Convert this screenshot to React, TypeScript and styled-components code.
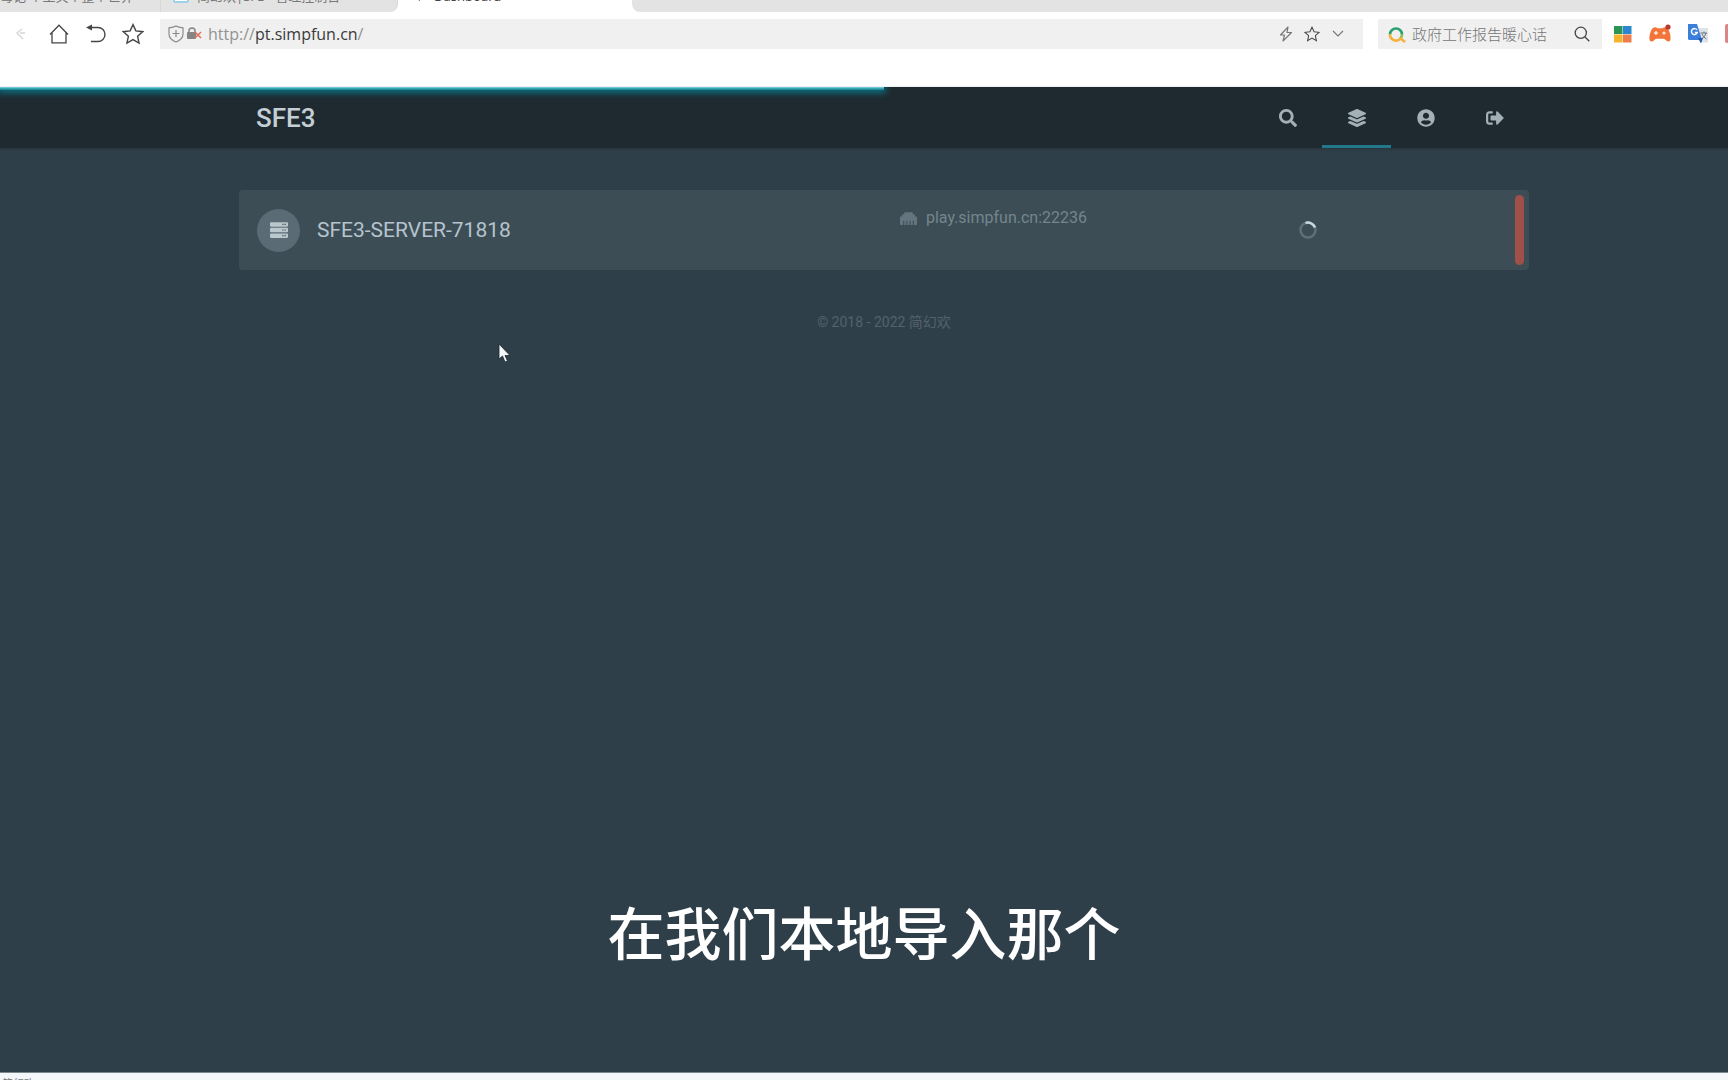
import React from "react";
import styled, { createGlobalStyle } from "styled-components";
import {
  FaSearch,
  FaLayerGroup,
  FaUserCircle,
  FaSignOutAlt,
  FaServer,
  FaEthernet,
} from "react-icons/fa";

const GlobalStyle = createGlobalStyle`
  * { box-sizing: border-box; }
  body {
    margin: 0;
    background: #f7f9fa;
    overflow: hidden;
    font-family: "Noto Sans", "Noto Sans CJK SC", sans-serif;
  }
  button, input { font: inherit; border: 0; padding: 0; margin: 0; background: none; color: inherit; outline: 0; }
`;

const Window = styled.div`
  display: flex;
  flex-direction: column;
  height: 100vh;
  overflow: hidden;
`;

/* Browser chrome */

const TabStrip = styled.div`
  display: flex;
  align-items: flex-end;
  height: 12px;
  overflow: hidden;
  background: #ffffff;
`;

const Tab = styled.button<{ $active?: boolean; $width: number; $round?: boolean }>`
  display: flex;
  align-items: center;
  gap: 8px;
  flex: none;
  width: ${(p) => p.$width}px;
  height: 26px;
  padding: 0 12px 6px;
  padding-left: ${(p) => (p.$round || p.$active ? 12 : 0)}px;
  border-right: 1px solid ${(p) => (p.$active ? "#ffffff" : "#d8d8d8")};
  border-radius: ${(p) => (p.$round ? "0 0 8px 0" : "0")};
  background: ${(p) => (p.$active ? "#ffffff" : "#e3e3e3")};
  color: ${(p) => (p.$active ? "#444444" : "#777777")};
  font-size: 13px;
  line-height: 20px;
  white-space: nowrap;
`;

const Favicon = styled.span<{ $color: string }>`
  width: 16px;
  height: 14px;
  border-radius: 2px;
  border: 2px solid ${(p) => p.$color};
  background: #ffffff;
`;

const TabArrow = styled.svg`
  width: 16px;
  height: 14px;
`;

const TabRest = styled.div`
  flex: 1;
  height: 26px;
  padding: 0 16px 6px;
  border-radius: 0 0 0 8px;
  background: #e3e3e3;
  color: #777777;
  line-height: 20px;
`;

const Toolbar = styled.div`
  display: flex;
  align-items: center;
  flex: none;
  height: 75px;
  padding: 0 0 31px 14px;
  background: #ffffff;
  overflow: hidden;
`;

const ToolButton = styled.button<{ $width?: number }>`
  display: flex;
  align-items: center;
  justify-content: center;
  flex: none;
  width: ${(p) => p.$width ?? 37}px;
  height: 28px;
  color: #454545;
`;

const BackIcon = styled.svg`
  width: 12px;
  height: 12px;
  margin-right: 12px;
`;

const AddressBar = styled.div`
  display: flex;
  align-items: center;
  flex: 1;
  height: 30px;
  margin-left: 9px;
  padding: 0 12px 0 8px;
  background: #f0f0f0;
  color: #8b8b8b;
`;

const LockIcon = styled.svg`
  width: 18px;
  height: 14px;
  margin-left: 2px;
`;

const Url = styled.label`
  display: flex;
  flex: 1;
  margin-left: 4px;
  color: #929292;
  font-family: "Open Sans", sans-serif;
  font-size: 16px;
  line-height: 22px;
`;

const UrlInput = styled.input`
  field-sizing: content;
  color: #3a3a3a;
`;

const SearchBox = styled.label`
  display: flex;
  align-items: center;
  gap: 6px;
  flex: none;
  width: 224px;
  height: 30px;
  margin-left: 15px;
  padding: 0 6px 0 10px;
  background: #f0f0f0;
  color: #606060;
`;

const SearchInput = styled.input`
  flex: 1;
  min-width: 0;
  font-family: "Noto Sans CJK SC", sans-serif;
  font-weight: 300;
  font-size: 15px;
  line-height: 22px;
  &::placeholder { color: #757575; opacity: 1; }
`;

const Extensions = styled.div`
  display: flex;
  align-items: center;
  flex: none;
  gap: 16px;
  width: 126px;
  padding-left: 12px;
  overflow: hidden;
`;

const ExtensionButton = styled.button`
  display: flex;
  flex: none;
`;

/* Dashboard page; it is wider than the window, so it runs past the right edge */

const Page = styled.main`
  position: relative;
  flex: 1;
  width: calc(100% + 40px);
  background: #2f3f49;
  font-family: Roboto, "Noto Sans CJK SC", sans-serif;
`;

const Progress = styled.div`
  position: absolute;
  top: 0;
  left: 0;
  width: 50%;
  height: 3px;
  background: linear-gradient(#8ad6de, #2a9cab 60%, #128090);
  box-shadow: 0 1px 6px 2px #0b7385;
  clip-path: inset(0 -12px -12px 0);
`;

const Header = styled.header`
  height: 61px;
  background: #1f2a30;
  box-shadow: 0 1px 2px #26333b;
`;

const Container = styled.div`
  display: flex;
  width: 1290px;
  max-width: 100%;
  height: 100%;
  margin: 0 auto;
`;

const Brand = styled.a`
  flex: 1;
  padding-left: 17px;
  color: #c3cfd4;
  font-size: 26px;
  font-weight: 500;
  line-height: 62px;
  text-decoration: none;
`;

const NavLink = styled.a<{ $active?: boolean }>`
  display: flex;
  align-items: center;
  justify-content: center;
  width: 69px;
  border-bottom: 3px solid ${(p) => (p.$active ? "#23778a" : "transparent")};
  border-top: 3px solid transparent;
  color: #a3b0b7;
  font-size: 18px;
`;

const Content = styled.section`
  width: 1290px;
  max-width: 100%;
  margin: 42px auto 0;
`;

const ServerRow = styled.a`
  position: relative;
  display: grid;
  grid-template-columns: repeat(12, 1fr);
  align-items: center;
  gap: 18px;
  height: 80px;
  padding: 0 18px;
  border-radius: 4px;
  background: #3d4d55;
  text-decoration: none;
`;

const ServerName = styled.div`
  grid-column: span 6;
  display: flex;
  align-items: center;
  gap: 17px;
  color: #b5c4ce;
  font-size: 21px;
`;

const ServerIcon = styled.span`
  display: flex;
  align-items: center;
  justify-content: center;
  width: 43px;
  height: 43px;
  border-radius: 50%;
  background: #5b6b76;
  color: #bac7cc;
  font-size: 18px;
`;

const Address = styled.div`
  grid-column: span 2;
  display: flex;
  align-items: center;
  justify-content: flex-end;
  align-self: start;
  gap: 9px;
  margin-top: 18px;
  color: #74858d;
  font-size: 16px;
  line-height: 20px;
  white-space: nowrap;
  svg { color: #64757f; font-size: 17px; }
`;

const Stats = styled.div`
  grid-column: span 4;
  display: flex;
  justify-content: center;
`;

const Spinner = styled.span`
  display: block;
  width: 18px;
  height: 18px;
`;

const StatusBar = styled.span`
  position: absolute;
  top: 5px;
  right: 5px;
  bottom: 5px;
  width: 9px;
  border-radius: 5px;
  background: #a05048;
`;

const Footer = styled.footer`
  padding-top: 42px;
  color: #52636c;
  font-size: 14px;
  line-height: 20px;
  text-align: center;
`;

const BottomStrip = styled.div`
  flex: none;
  height: 8px;
  overflow: hidden;
  padding: 4px 0 0 2px;
  background: #f5f8fa;
  border-top: 1px solid #7d888e;
  color: #777777;
  font-size: 11px;
  line-height: 14px;
`;

const Subtitle = styled.p`
  position: fixed;
  left: 0;
  right: 0;
  bottom: 110px;
  margin: 0;
  color: #ffffff;
  font-family: "Noto Sans CJK SC", sans-serif;
  font-size: 57px;
  font-weight: 500;
  line-height: 80px;
  text-align: center;
`;

const Pointer = styled.svg`
  position: fixed;
  left: 498px;
  top: 343px;
  width: 14px;
  height: 20px;
`;

const StarPath = "M10 1.5l2.6 5.7 6.2.7-4.6 4.2 1.3 6.2L10 15.1l-5.5 3.2 1.3-6.2L1.2 7.9l6.2-.7z";

const Star = ({ size }: { size: number }) => (
  <svg width={size} height={size} viewBox="0 0 20 20" fill="none" stroke="currentColor" strokeWidth="1.3">
    <path d={StarPath} />
  </svg>
);

const Chrome = () => (
  <>
    <TabStrip>
      <Tab $width={161}>每记 个主关个整个世界</Tab>
      <Tab $width={237} $round>
        <Favicon $color="#9fd0ea" />
        简幻欢|SFE - 管理控制台
      </Tab>
      <Tab $width={234} $active>
        <TabArrow viewBox="0 0 16 14">
          <path d="M1 7h9v5z" fill="#2c7396" />
        </TabArrow>
        Dashboard
      </Tab>
      <TabRest>+</TabRest>
    </TabStrip>
    <Toolbar>
      <ToolButton aria-label="Back" $width={26}>
        <BackIcon viewBox="0 0 12 12" fill="none" stroke="#d5d5d5" strokeWidth="1.4">
          <path d="M7 1L2 5l6 6M5 5h5" />
        </BackIcon>
      </ToolButton>
      <ToolButton aria-label="Home">
        <svg width="20" height="20" viewBox="0 0 20 20" fill="none" stroke="currentColor" strokeWidth="1.3">
          <path d="M1 10.5L10 1.2l9 9.3M3 8.8v10h14v-10" />
        </svg>
      </ToolButton>
      <ToolButton aria-label="Reload">
        <svg width="20" height="20" viewBox="0 0 20 20" fill="none" stroke="currentColor" strokeWidth="1.4">
          <path d="M3 3.5h9a7 7 0 0 1 0 14H5" />
          <path d="M0 3.5L6 .5v6z" fill="currentColor" stroke="none" />
        </svg>
      </ToolButton>
      <ToolButton aria-label="Bookmark">
        <Star size={22} />
      </ToolButton>
      <AddressBar>
        <svg width="16" height="18" viewBox="0 0 16 18" fill="none" stroke="currentColor" strokeWidth="1.2">
          <path d="M8 1c2 1.2 4.3 1.6 7 1.8V9c0 4-3 6.5-7 8-4-1.5-7-4-7-8V2.8C3.700 2.600 6 2.200 8 1zM8 5v7M4.500 8.500h7" />
        </svg>
        <LockIcon viewBox="0 0 18 14">
          <path d="M3 6V4a3 3 0 0 1 6 0v2" fill="none" stroke="#858585" strokeWidth="1.5" />
          <rect x="1" y="5" width="9" height="7" rx="1" fill="#858585" />
          <path d="M9 5l6 6M15 5l-6 6" stroke="#dc7358" strokeWidth="1.5" />
        </LockIcon>
        <Url>
          http://
          <UrlInput aria-label="Address" defaultValue="pt.simpfun.cn" />/
        </Url>
        <ToolButton aria-label="Speed mode" $width={26}>
          <svg width="14" height="16" viewBox="0 0 14 16" fill="none" stroke="#777777" strokeWidth="1.2" strokeLinejoin="round">
            <path d="M9 1L1.5 9h4L4 15l8.5-8.5H8z" />
          </svg>
        </ToolButton>
        <ToolButton aria-label="Add favourite" $width={26}>
          <Star size={16} />
        </ToolButton>
        <ToolButton aria-label="History" $width={26}>
          <svg width="12" height="8" viewBox="0 0 12 8" fill="none" stroke="#777777" strokeWidth="1.2">
            <path d="M1 1l5 5 5-5" />
          </svg>
        </ToolButton>
      </AddressBar>
      <SearchBox>
        <svg width="18" height="17" viewBox="0 0 18 17" fill="none" strokeWidth="2.6">
          <path d="M2 8.5A6 6 0 0 1 14 8.5" stroke="#2c9f70" />
          <path d="M14 8a6 6 0 0 1-2 5" stroke="#8dbb5a" />
          <path d="M2 8a6 6 0 0 0 10.500 4.500M12 12l5 4" stroke="#f3b23c" />
        </svg>
        <SearchInput aria-label="Search" placeholder="政府工作报告暖心话" />
        <ToolButton as="span" $width={28}>
          <svg width="16" height="16" viewBox="0 0 16 16" fill="none" stroke="currentColor" strokeWidth="1.3">
            <circle cx="6.8" cy="6.8" r="5.6" />
            <path d="M11 11l4.3 4.3" />
          </svg>
        </ToolButton>
      </SearchBox>
      <Extensions>
        <ExtensionButton aria-label="Apps">
          <svg width="18" height="18" viewBox="0 0 18 18">
            <path d="M0 1h8.500v8H0z" fill="#2a9454" />
            <path d="M9 1h8.500v8H9z" fill="#2b86d0" />
            <path d="M0 9.500h8.500v8H0z" fill="#f6b32c" />
            <path d="M9 9.500h8.500v8H9z" fill="#ee7d4e" />
          </svg>
        </ExtensionButton>
        <ExtensionButton aria-label="Games">
          <svg width="24" height="20" viewBox="0 0 24 20">
            <path d="M6 3.500q2-.5 3.500.8h5Q16 3 18 3.500c3 .5 5 8 4.500 12-.5 2.500-3 2.500-4.300 1-1-1-1.700-1.700-3-1.700H9c-1.500 0-2 .6-3.200 1.700C4.500 18 2 18 1.500 15.500 1 11.500 3 4 6 3.500z" fill="#f3753a" />
            <path d="M8 7v4M6 9h4" stroke="#ffe7d6" strokeWidth="1.5" />
            <circle cx="16" cy="9" r="1.600" fill="#ffe7d6" />
            <circle cx="20" cy="3" r="2.600" fill="#b83a2e" />
          </svg>
        </ExtensionButton>
        <ExtensionButton aria-label="Translate">
          <svg width="21" height="20" viewBox="0 0 21 20">
            <path d="M9 4h11v14.500H12z" fill="#dfe3e6" />
            <path d="M12.500 9h6.500M16 7.500V9M18 9c-.8 3-2.500 4.500-4.500 6M14 10c1 2.500 2.500 3.700 4.500 5" stroke="#68757f" fill="none" />
            <path d="M0 0h9l5 16H1.500Q0 16 0 14.500z" fill="#3b7fdc" />
            <path d="M10 14h5l-2 5.500z" fill="#2758ad" />
            <path d="M9 6A3 3 0 1 0 9.300 8.500H6.800" fill="none" stroke="#ffffff" strokeWidth="1.4" />
          </svg>
        </ExtensionButton>
        <ExtensionButton aria-label="More">
          <svg width="12" height="20" viewBox="0 0 12 20">
            <rect width="16" height="19" rx="2" fill="#dc8585" />
          </svg>
        </ExtensionButton>
      </Extensions>
    </Toolbar>
  </>
);

const LoadingSpinner = () => (
  <Spinner role="status" aria-label="Loading">
    <svg width="18" height="18" viewBox="0 0 18 18" fill="none" strokeWidth="2.5">
      <circle cx="9" cy="9" r="7.5" stroke="#5f6f77" />
      <path d="M6.5 2A7.5 7.5 0 0 1 16 6.5" stroke="#cbd9dd" />
    </svg>
  </Spinner>
);

export default function App() {
  return (
    <Window>
      <GlobalStyle />
      <Chrome />
      <Page>
        <Header>
          <Container as="nav">
            <Brand href="#">SFE3</Brand>
            <NavLink href="#search" aria-label="Search"><FaSearch /></NavLink>
            <NavLink href="#servers" aria-label="Servers" $active><FaLayerGroup /></NavLink>
            <NavLink href="#account" aria-label="Account"><FaUserCircle /></NavLink>
            <NavLink href="#logout" aria-label="Sign out"><FaSignOutAlt /></NavLink>
          </Container>
        </Header>
        <Progress />
        <Content>
          <ServerRow href="#server">
            <ServerName>
              <ServerIcon><FaServer /></ServerIcon>
              SFE3-SERVER-71818
            </ServerName>
            <Address>
              <FaEthernet />
              play.simpfun.cn:22236
            </Address>
            <Stats><LoadingSpinner /></Stats>
            <StatusBar />
          </ServerRow>
          <Footer>© 2018 - 2022 简幻欢</Footer>
        </Content>
      </Page>
      <BottomStrip>简幻欢</BottomStrip>
      <Subtitle>在我们本地导入那个</Subtitle>
      <Pointer viewBox="0 0 14 20">
        <path d="M1 1v15l3.5-3 2.5 6 2.500-1L7 12.500h5z" fill="#f4f8fa" stroke="#1d272d" strokeWidth=".8" />
      </Pointer>
    </Window>
  );
}
